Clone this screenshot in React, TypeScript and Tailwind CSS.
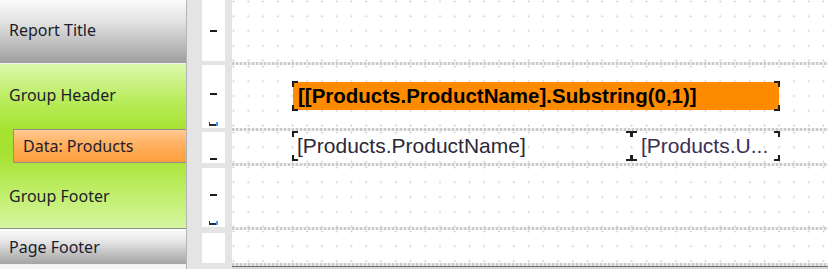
import React from "react";

const font = "font-['Liberation_Sans',Arial,sans-serif]";
const uiFont = "font-['Noto_Sans',sans-serif]";
const dots =
  "bg-white bg-[radial-gradient(circle_at_1.5px_1.5px,#c8c8c8_0.7px,transparent_1.2px)] bg-[length:14.75px_14.75px]";

function Sep() {
  return (
    <div className="h-[3px] bg-[repeating-linear-gradient(90deg,#cacaca_0px,#cacaca_2px,#ececec_2px,#ececec_4px)]" />
  );
}

function Corners({ left = true, right = true }: { left?: boolean; right?: boolean }) {
  const c = "absolute w-[6px] h-[6px] border-[#1e1e1e]";
  return (
    <>
      {left && <span className={`${c} -left-[1px] -top-[1px] border-l-2 border-t-2`} />}
      {left && <span className={`${c} -left-[1px] -bottom-[1px] border-l-2 border-b-2`} />}
      {right && <span className={`${c} -right-[1px] -top-[1px] border-r-2 border-t-2`} />}
      {right && <span className={`${c} -right-[1px] -bottom-[1px] border-r-2 border-b-2`} />}
    </>
  );
}

function Dash() {
  return <div className="w-[7px] h-[2px] bg-[#1a1a1a]" />;
}

function Marker() {
  return (
    <div className="flex items-end">
      <div className="w-[1px] h-[4px] bg-[#333]" />
      <div className="w-[6px] h-[2px] bg-[#2a2a2a]" />
      <div className="w-[2px] h-[4px] bg-[#3c9dff]" />
    </div>
  );
}

export default function App() {
  return (
    <div className={`w-[828px] h-[269px] flex overflow-hidden bg-[#f2f2f2] ${uiFont}`}>
      {/* Left band list */}
      <div className="w-[187px] flex flex-col border-r border-[#b4b4b4]">
        <div className="h-[63px] flex items-center pl-[9px] pb-[3px] text-[16px] text-[#1c1c2c] bg-[linear-gradient(to_bottom,#fbfbfb_0%,#e2e2e2_35%,#b8b8b8_75%,#9e9e9e_100%)]">
          Report Title
        </div>
        <div className="h-[1px] bg-[#f4f4f4]" />
        <div className="h-[164px] flex flex-col bg-[linear-gradient(to_bottom,#dcf8ad_0%,#b9ec5c_22%,#a6e231_40%,#a6e231_55%,#bfee68_78%,#d6f6a2_100%)]">
          <div className="h-[65px] flex items-center pl-[9px] pb-[3px] text-[16px] text-[#1c1c2c]">
            Group Header
          </div>
          <div className="h-[34px] ml-[13px] flex items-center pl-[9px] pb-[1px] text-[16px] text-[#1c1c2c] border border-r-0 border-[#8e8e8e] bg-[linear-gradient(to_bottom,#ffc992_0%,#ffb060_45%,#ff9f3c_100%)]">
            Data: Products
          </div>
          <div className="flex-1 flex items-center pl-[9px] text-[16px] text-[#1c1c2c]">
            Group Footer
          </div>
        </div>
        <div className="h-[1px] bg-[#8c8c8c]" />
        <div className="h-[35px] flex items-center pl-[9px] text-[16px] text-[#1c1c2c] bg-[linear-gradient(to_bottom,#fdfdfd_0%,#e6e6e6_35%,#bcbcbc_75%,#a4a4a4_100%)]">
          Page Footer
        </div>
        <div className="flex-1 bg-[#f4f4f4]" />
      </div>

      {/* Ruler column */}
      <div className="w-[45px] flex flex-col pl-[15px] bg-[#e4e4e4]">
        <div className="w-[23px] h-[61px] bg-white flex items-center justify-center">
          <Dash />
        </div>
        <div className="w-[23px] h-[63px] mt-[4px] bg-white flex flex-col items-center">
          <div className="flex-1 flex items-center">
            <Dash />
          </div>
          <div className="mb-[2px]">
            <Marker />
          </div>
        </div>
        <div className="w-[23px] h-[31px] mt-[4px] bg-white flex flex-col items-center justify-end pb-[3px]">
          <Dash />
        </div>
        <div className="w-[23px] h-[59px] mt-[5px] bg-white flex flex-col items-center">
          <div className="flex-1 flex items-center">
            <Dash />
          </div>
          <div className="mb-[2px]">
            <Marker />
          </div>
        </div>
        <div className="w-[23px] h-[30px] mt-[6px] bg-white" />
      </div>

      {/* Canvas */}
      <div className={`flex-1 flex flex-col bg-white ${font}`}>
        <div className={`h-[62px] ${dots}`} />
        <Sep />
        <div className={`h-[63px] relative ${dots}`}>
          <div className="absolute left-[61px] top-[17px] w-[486px] h-[28px] bg-[#ff8c00] flex items-center pl-[5px] text-[20.5px] font-bold text-black whitespace-nowrap">
            [[Products.ProductName].Substring(0,1)]
            <Corners />
          </div>
        </div>
        <Sep />
        <div className={`h-[32px] relative ${dots}`}>
          <div className="absolute left-[61px] top-[1px] w-[338px] h-[28px] flex items-center pl-[4px] text-[21px] text-[#2d2838] whitespace-nowrap">
            [Products.ProductName]
            <Corners />
          </div>
          <div className="absolute left-[400px] top-[1px] w-[147px] h-[28px] flex items-center pl-[9px] text-[21px] text-[#3a2f55] whitespace-nowrap">
            [Products.U...
            <Corners />
          </div>
        </div>
        <Sep />
        <div className={`h-[61px] ${dots}`} />
        <Sep />
        <div className={`h-[33px] ${dots}`} />
        <Sep />
        <div className="h-[1px] bg-[#6e6e6e]" />
        <div className="flex-1 bg-[#d8d8d8]" />
      </div>
    </div>
  );
}
